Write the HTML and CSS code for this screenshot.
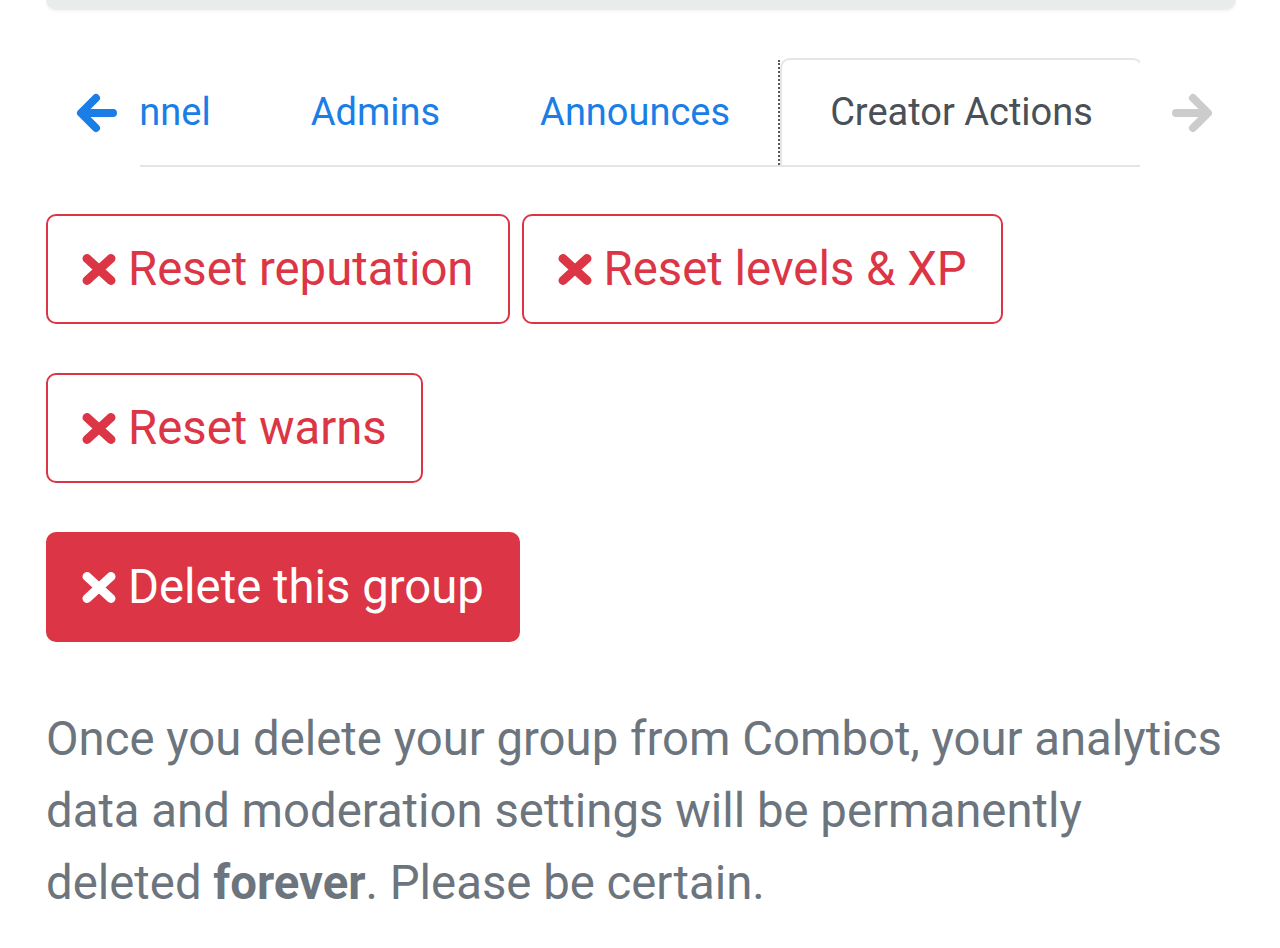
FILE: index.html
```html
<!DOCTYPE html>
<html>
<head>
<meta charset="utf-8">
<link rel="stylesheet" href="styles.css">
</head>
<body>
<div class="page">
  <div class="topbar"></div>
  <div class="tabs-row">
    <div class="nav-arrow left">
      <svg width="42" height="42" viewBox="0 0 42 42"><path d="M37 21H6M20 6L5 21L20 36" fill="none" stroke="#1a7ee6" stroke-width="8" stroke-linecap="round" stroke-linejoin="round"/></svg>
    </div>
    <div class="tabs-scroll">
      <div class="tablist">
        <a class="tab">Channel</a>
        <a class="tab">Admins</a>
        <a class="tab focused">Announces</a>
        <a class="tab active">Creator Actions</a>
        <a class="tab">Settings</a>
      </div>
    </div>
    <div class="nav-arrow right">
      <svg width="42" height="42" viewBox="0 0 42 42"><path d="M5 21H36M22 6L37 21L22 36" fill="none" stroke="#cccccc" stroke-width="8" stroke-linecap="round" stroke-linejoin="round"/></svg>
    </div>
  </div>

  <div class="btn-group">
    <button class="btn outline"><svg class="x" width="34" height="31" viewBox="0 0 34 31"><path d="M5 4.5L29 26.5M29 4.5L5 26.5" stroke="currentColor" stroke-width="9" stroke-linecap="round"/></svg><span>Reset reputation</span></button>
    <button class="btn outline"><svg class="x" width="34" height="31" viewBox="0 0 34 31"><path d="M5 4.5L29 26.5M29 4.5L5 26.5" stroke="currentColor" stroke-width="9" stroke-linecap="round"/></svg><span>Reset levels &amp; XP</span></button>
    <button class="btn outline"><svg class="x" width="34" height="31" viewBox="0 0 34 31"><path d="M5 4.5L29 26.5M29 4.5L5 26.5" stroke="currentColor" stroke-width="9" stroke-linecap="round"/></svg><span>Reset warns</span></button>
  </div>
  <div class="danger-row">
    <button class="btn solid"><svg class="x" width="34" height="31" viewBox="0 0 34 31"><path d="M5 4.5L29 26.5M29 4.5L5 26.5" stroke="currentColor" stroke-width="9" stroke-linecap="round"/></svg><span>Delete this group</span></button>
  </div>
  <p class="note">Once you delete your group from Combot, your analytics data and moderation settings will be permanently deleted <b>forever</b>. Please be certain.</p>
</div>
</body>
</html>
```

FILE: styles.css
```css
html, body {
  margin: 0;
  padding: 0;
  background: #ffffff;
}
body {
  font-family: Roboto, "Liberation Sans", Arial, sans-serif;
  overflow: hidden;
}
.page {
  padding: 0 44px 0 46px;
}
.topbar {
  height: 10px;
  background: #e8eceb;
  border-radius: 0 0 12px 12px;
  box-shadow: 0 2px 3px rgba(0,0,0,0.04);
}
.tabs-row {
  margin-top: 48px;
  display: flex;
  align-items: center;
}
.nav-arrow {
  width: 94px;
  display: flex;
  align-items: center;
  box-sizing: border-box;
}
.nav-arrow.left {
  padding-left: 30px;
}
.nav-arrow.right {
  padding-left: 31px;
}
.nav-arrow svg {
  display: block;
}
.tabs-scroll {
  width: 1000px;
  overflow: hidden;
  border-bottom: 2px solid #e3e5e7;
}
.tablist {
  display: flex;
  margin-left: -117px;
  white-space: nowrap;
}
.tab {
  flex: none;
  display: block;
  font-size: 38px;
  line-height: 57px;
  padding: 24px 48px;
  border: 2px solid transparent;
  border-bottom: 0;
  border-radius: 10px 10px 0 0;
  color: #1a7ee6;
}
.tab.focused {
  position: relative;
}
.tab.focused::after {
  content: "";
  position: absolute;
  right: -2px;
  top: 0;
  bottom: 0;
  border-right: 2px dotted #555a60;
}
.tab.active {
  color: #495057;
  border-color: #e3e5e7;
}
.btn-group {
  margin-top: 47px;
  display: flex;
  flex-wrap: wrap;
  column-gap: 12px;
  row-gap: 49px;
}
.btn {
  display: inline-flex;
  align-items: center;
  gap: 12px;
  height: 110px;
  box-sizing: border-box;
  padding: 0 34px;
  border: 2px solid #dc3545;
  border-radius: 10px;
  font-family: Roboto, "Liberation Sans", Arial, sans-serif;
  font-size: 47.3px;
  line-height: 72px;
  background: #ffffff;
  color: #dc3545;
  cursor: pointer;
}
.btn .x {
  display: block;
  flex: none;
}
.btn.solid {
  background: #dc3545;
  color: #ffffff;
}
.danger-row {
  margin-top: 49px;
  display: flex;
}
.note {
  margin: 61px 0 0 0;
  font-size: 47.3px;
  line-height: 72px;
  color: #6c757d;
}
.note b {
  font-weight: 700;
}
```
